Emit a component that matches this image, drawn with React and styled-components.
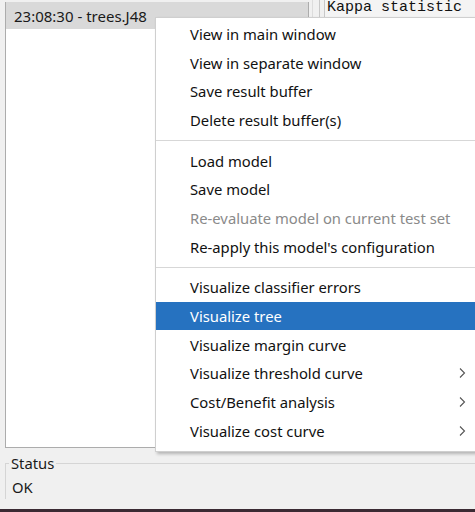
import React from 'react';
import styled, { createGlobalStyle } from 'styled-components';

const GlobalStyle = createGlobalStyle`
    html, body {
        margin: 0;
        padding: 0;
        background: #f0f0f0;
        overflow: hidden;
    }
`;

const menuItems = [
    { label: 'View in main window' },
    { label: 'View in separate window' },
    { label: 'Save result buffer' },
    { label: 'Delete result buffer(s)' },
    { separator: true },
    { label: 'Load model' },
    { label: 'Save model' },
    { label: 'Re-evaluate model on current test set', disabled: true },
    { label: "Re-apply this model's configuration" },
    { separator: true },
    { label: 'Visualize classifier errors' },
    { label: 'Visualize tree', active: true },
    { label: 'Visualize margin curve' },
    { label: 'Visualize threshold curve', submenu: true },
    { label: 'Cost/Benefit analysis', submenu: true },
    { label: 'Visualize cost curve', submenu: true },
];

const Chevron = () => (
    <svg width="8" height="12" viewBox="0 0 8 12">
        <path d="M2 1.5 L6.5 6 L2 10.5" fill="none" stroke="#555" strokeWidth="1.1" />
    </svg>
);

export default function App() {
    return (
        <Window>
            <GlobalStyle />
            <Top>
                <ResultList>
                    <ResultRow selected>23:08:30 - trees.J48</ResultRow>
                </ResultList>
                <Divider />
                <Output>
                    <OutputText>Kappa statistic</OutputText>
                </Output>
            </Top>
            <Status>
                <Legend>Status</Legend>
                <StatusText>OK</StatusText>
            </Status>
            <BottomEdge />

            <Menu>
                {menuItems.map((item, i) =>
                    item.separator ? (
                        <Separator key={i} />
                    ) : (
                        <Item key={i} active={item.active} disabled={item.disabled}>
                            <span>{item.label}</span>
                            {item.submenu && <Chevron />}
                        </Item>
                    )
                )}
            </Menu>
        </Window>
    );
}

const Window = styled.div`
    position: relative;
    width: 475px;
    height: 512px;
    display: flex;
    flex-direction: column;
    background: #f0f0f0;
    font-family: 'Noto Sans', 'Open Sans', sans-serif;
    color: #000;
    overflow: hidden;
`;

const Top = styled.div`
    display: flex;
    height: 448px;
    padding: 2px 0 0 5px;
    box-sizing: border-box;
`;

const ResultList = styled.div`
    width: 304px;
    background: #fff;
    border: 1px solid #acacac;
    border-top: none;
    box-sizing: border-box;
`;

const ResultRow = styled.div`
    height: 27px;
    padding-left: 8px;
    display: flex;
    align-items: center;
    font-size: 15px;
    color: #1a1a1a;
    background: ${props => (props.selected ? '#d9d9d9' : 'transparent')};
`;

const Divider = styled.div`
    width: 8px;
    margin: -2px 0 0 3px;
    border-left: 1px solid #dcdcdc;
    border-right: 1px solid #c8c8c8;
    box-sizing: border-box;
`;

const Output = styled.div`
    flex: 1;
    margin-top: -2px;
    margin-left: 4px;
    background: #f4f4f4;
    border-left: 1px solid #c8c8c8;
`;

const OutputText = styled.div`
    font-family: 'Liberation Mono', 'Courier New', monospace;
    font-size: 15px;
    line-height: 15px;
    padding: 0 0 0 2px;
    color: #111;
`;

const Status = styled.fieldset`
    margin: 5px 0 0 5px;
    padding: 0 0 0 6px;
    border: none;
    border-top: 1px solid #d5d5d5;
    border-left: 1px solid #d5d5d5;
    height: 45px;
`;

const Legend = styled.legend`
    font-size: 14.8px;
    padding: 0 2px;
    margin-left: -3px;
    color: #1a1a1a;
`;

const StatusText = styled.div`
    font-size: 14.8px;
    padding-top: 4px;
    color: #1a1a1a;
`;

const BottomEdge = styled.div`
    margin-top: auto;
    height: 3px;
    background: #3b2a33;
`;

const Menu = styled.div`
    position: absolute;
    left: 155px;
    top: 17px;
    width: 330px;
    padding: 1.5px 0 6px;
    background: #fff;
    border: 1px solid #cfcfcf;
    box-shadow: 2px 2px 3px rgba(0, 0, 0, 0.25);
`;

const Item = styled.div`
    height: 28.7px;
    display: flex;
    align-items: center;
    justify-content: space-between;
    padding: 0 20px 0 34px;
    font-size: 14.8px;
    background: ${props => (props.active ? '#2672c0' : 'transparent')};
    color: ${props => (props.active ? '#fff' : props.disabled ? '#8a8a8a' : '#111')};
`;

const Separator = styled.div`
    height: 1px;
    background: #d7d7d7;
    margin: 6px 0 5px;
`;
